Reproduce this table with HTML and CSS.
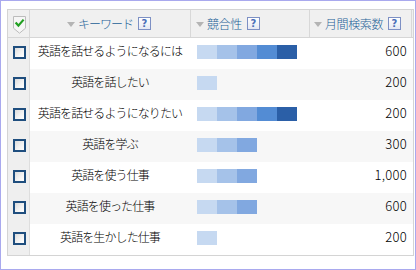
FILE: index.html
```html
<!DOCTYPE html>
<html lang="ja">
<head>
<meta charset="utf-8">
<link rel="stylesheet" href="styles.css">
</head>
<body>
<div class="frame">
  <div class="grid">
    <div class="row head">
      <div class="cell chk">
        <svg class="shield" width="13" height="18" viewBox="0 0 13 18">
          <path d="M0.5 0.5H12.5V12.2L6.5 17.2L0.5 12.2Z" fill="#f6f6f6" stroke="#bcbcbc"/>
          <path d="M2.6 6.6L5.4 9.6L10.6 3.6" fill="none" stroke="#22a022" stroke-width="2.2"/>
        </svg>
      </div>
      <div class="cell kw-h"><span class="tri"></span><span class="htext tight">キーワード</span><span class="q">?</span></div>
      <div class="cell comp-h"><span class="tri"></span><span class="htext">競合性</span><span class="q">?</span></div>
      <div class="cell vol-h"><span class="tri"></span><span class="htext">月間検索数</span><span class="q">?</span></div>
      <div class="cell end"></div>
    </div>

    <div class="row">
      <div class="cell chk"><span class="box"></span></div>
      <div class="cell kw">英語を話せるようになるには</div>
      <div class="cell comp"><span class="bar"><i class="s1"></i><i class="s2"></i><i class="s3"></i><i class="s4"></i><i class="s5"></i></span></div>
      <div class="cell vol">600</div>
      <div class="cell end"></div>
    </div>
    <div class="row alt">
      <div class="cell chk"><span class="box"></span></div>
      <div class="cell kw">英語を話したい</div>
      <div class="cell comp"><span class="bar"><i class="s1"></i></span></div>
      <div class="cell vol">200</div>
      <div class="cell end"></div>
    </div>
    <div class="row">
      <div class="cell chk"><span class="box"></span></div>
      <div class="cell kw">英語を話せるようになりたい</div>
      <div class="cell comp"><span class="bar"><i class="s1"></i><i class="s2"></i><i class="s3"></i><i class="s4"></i><i class="s5"></i></span></div>
      <div class="cell vol">200</div>
      <div class="cell end"></div>
    </div>
    <div class="row alt">
      <div class="cell chk"><span class="box"></span></div>
      <div class="cell kw">英語を学ぶ</div>
      <div class="cell comp"><span class="bar"><i class="s1"></i><i class="s2"></i><i class="s3"></i></span></div>
      <div class="cell vol">300</div>
      <div class="cell end"></div>
    </div>
    <div class="row">
      <div class="cell chk"><span class="box"></span></div>
      <div class="cell kw">英語を使う仕事</div>
      <div class="cell comp"><span class="bar"><i class="s1"></i><i class="s2"></i><i class="s3"></i></span></div>
      <div class="cell vol">1,000</div>
      <div class="cell end"></div>
    </div>
    <div class="row alt">
      <div class="cell chk"><span class="box"></span></div>
      <div class="cell kw">英語を使った仕事</div>
      <div class="cell comp"><span class="bar"><i class="s1"></i><i class="s2"></i><i class="s3"></i></span></div>
      <div class="cell vol">600</div>
      <div class="cell end"></div>
    </div>
    <div class="row">
      <div class="cell chk"><span class="box"></span></div>
      <div class="cell kw">英語を生かした仕事</div>
      <div class="cell comp"><span class="bar"><i class="s1"></i></span></div>
      <div class="cell vol">200</div>
      <div class="cell end"></div>
    </div>
  </div>
</div>
</body>
</html>
```

FILE: styles.css
```css
* { box-sizing: border-box; }
html, body { margin: 0; padding: 0; background: #ffffff; }
body {
  font-family: "Noto Sans CJK JP", "Liberation Sans", sans-serif;
  font-size: 12px;
  font-weight: 300;
  color: #000;
}
.frame {
  width: 416px;
  height: 270px;
  border: 1px solid #a9a9ee;
  padding: 8px 0 0 6px;
  background: #ffffff;
}
.grid {
  width: 407px;
  border: 1px solid #d4d4d4;
  background: #fff;
}
.row {
  display: grid;
  grid-template-columns: 22px 161px 119px 102px 1px;
  height: 31px;
}
.row.alt { background: #f7f7f7; }
.row.head {
  height: 28px;
  background: #f0f0f0;
  border-bottom: 1px solid #d6d6d6;
}
.cell {
  display: flex;
  align-items: center;
  overflow: hidden;
  white-space: nowrap;
}
.head .cell { border-right: 1px solid #d8d8d8; }
.head .cell.end { border-right: none; }
.chk {
  justify-content: center;
  background: #efefef;
  border-right: 1px solid #dedede;
}
.head .chk { background: #f0f0f0; }
.shield { display: block; margin-top: 2px; margin-left: 1px; }
.box {
  width: 13px;
  height: 13px;
  border: 2px solid #1f4e7e;
  background: linear-gradient(135deg, #dcdcdc 0%, #f4f4f4 60%, #ffffff 100%);
  margin-left: 1px;
  margin-bottom: 3px;
}
.kw-h { justify-content: center; padding-right: 2px; }
.comp-h { padding-left: 5px; }
.vol-h { padding-left: 4px; }
.tri {
  width: 0;
  height: 0;
  border-left: 4px solid transparent;
  border-right: 4px solid transparent;
  border-top: 5px solid #b4b4b4;
  margin-right: 3px;
  margin-top: 1px;
}
.htext {
  color: #1b5f97;
  letter-spacing: -0.4px;
}
.htext.tight { letter-spacing: -1px; }
.q {
  width: 13px;
  height: 13px;
  margin-left: 5px;
  border: 1px solid #7d90c4;
  background: linear-gradient(#ffffff, #e4e8f2);
  color: #4a6fb8;
  font-family: "DejaVu Sans", sans-serif;
  font-weight: bold;
  font-size: 10px;
  line-height: 11px;
  text-align: center;
  display: flex;
  align-items: center;
  justify-content: center;
}
.kw {
  justify-content: center;
  letter-spacing: -0.9px;
  padding-right: 1px;
  padding-bottom: 6px;
}
.comp { padding-left: 6px; }
.bar { display: flex; height: 14px; margin-top: -3px; }
.bar i { display: block; width: 20px; height: 14px; }
.bar .s1 { background: #c6d9f1; }
.bar .s2 { background: #a5c2e9; }
.bar .s3 { background: #81a8e0; }
.bar .s4 { background: #538cd4; }
.bar .s5 { background: #2b5fa7; }
.vol {
  justify-content: flex-end;
  padding-right: 5px;
  padding-bottom: 6px;
  font-size: 13px;
  letter-spacing: 0.3px;
}
```
